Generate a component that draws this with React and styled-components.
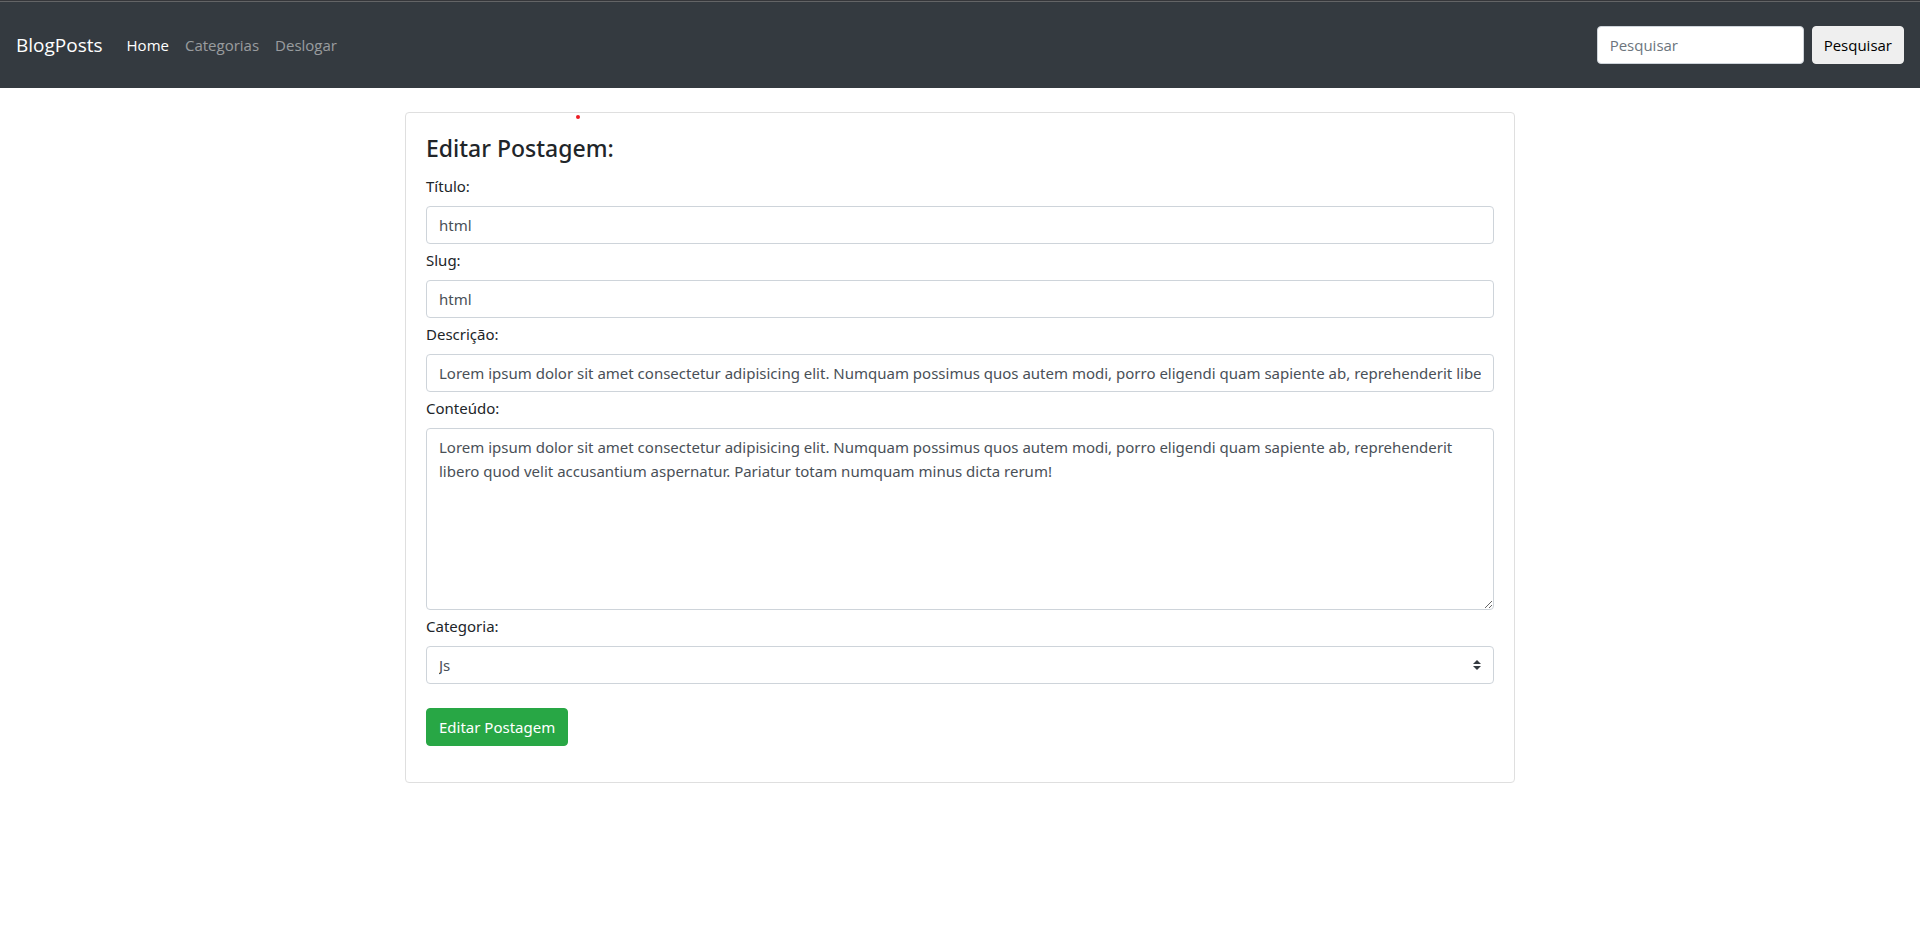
import React from "react";
import styled, { createGlobalStyle } from "styled-components";

const GlobalStyle = createGlobalStyle`
  *, *::before, *::after { box-sizing: border-box; }
  body {
    margin: 0;
    background: #fff;
    color: #212529;
    font-family: "Segoe UI", "Noto Sans", "Open Sans", sans-serif;
    font-size: 15px;
    line-height: 24px;
  }
  input, textarea, select, button { font: inherit; }
`;

const TopEdge = styled.div`
  height: 2px;
  background: #35363a;
  border-bottom: 1px solid #636466;
`;

const Navbar = styled.nav`
  display: flex;
  align-items: center;
  padding: 24px 16px;
  background: #343a40;
  font-family: "Segoe UI", "Open Sans", "Noto Sans", sans-serif;
`;

const Brand = styled.a`
  margin-right: 16px;
  color: #fff;
  font-size: 19px;
  line-height: 30px;
  text-decoration: none;
`;

const NavList = styled.ul`
  display: flex;
  flex: 1;
  margin: 0;
  padding: 0;
  list-style: none;
`;

const NavLink = styled.a`
  display: block;
  padding: 4px 8px;
  color: ${(p) => (p.$active ? "#fff" : "rgba(255, 255, 255, 0.5)")};
  text-decoration: none;
`;

const SearchForm = styled.form`
  display: flex;
  gap: 8px;
`;

const Input = styled.input`
  display: block;
  width: 100%;
  height: 38px;
  padding: 6px 12px;
  border: 1px solid #ced4da;
  border-radius: 4px;
  background: #fff;
  color: #495057;
  &::placeholder { color: #6c757d; opacity: 1; }
`;

const SearchInput = styled(Input)`
  width: 207px;
`;

const Button = styled.button`
  padding: 6px 12px;
  border: 1px solid ${(p) => (p.$success ? "#28a745" : "#efefef")};
  border-radius: 4px;
  background: ${(p) => (p.$success ? "#28a745" : "#efefef")};
  color: ${(p) => (p.$success ? "#fff" : "#000")};
  cursor: pointer;
`;

const SearchButton = styled(Button)`
  padding: 6px 11px;
`;

const Container = styled.main`
  max-width: 1110px;
  margin: 24px auto;
`;

const Card = styled.section`
  position: relative;
  padding: 20px 20px 36px;
  border: 1px solid #dfdfdf;
  border-radius: 4px;
`;

const Marker = styled.span`
  position: absolute;
  top: 2px;
  left: 170px;
  width: 4px;
  height: 4px;
  border-radius: 50%;
  background: #ed1c24;
`;

const Title = styled.h1`
  margin: 0 0 10px;
  font-size: 23px;
  font-weight: 500;
  line-height: 31px;
`;

const PostForm = styled.form`
  display: flex;
  flex-direction: column;
  gap: 4px;
`;

const Field = styled.div`
  display: flex;
  flex-direction: column;
  gap: 8px;
`;

const TextArea = styled.textarea`
  display: block;
  width: 100%;
  height: 182px;
  padding: 6px 12px;
  border: 1px solid #ced4da;
  border-radius: 4px;
  background: #fff;
  color: #495057;
  resize: vertical;
`;

const SelectWrap = styled.div`
  position: relative;
`;

const Select = styled.select`
  display: block;
  width: 100%;
  height: 38px;
  padding: 6px 28px 6px 12px;
  border: 1px solid #ced4da;
  border-radius: 4px;
  background: #fff;
  color: #495057;
  appearance: none;
`;

const SelectArrows = styled.svg`
  position: absolute;
  top: 14px;
  right: 13px;
  width: 8px;
  height: 10px;
  pointer-events: none;
`;

const Actions = styled.div`
  padding-top: 20px;
`;

const LOREM =
  "Lorem ipsum dolor sit amet consectetur adipisicing elit. Numquam possimus quos autem modi, porro eligendi quam sapiente ab, reprehenderit libero quod velit accusantium aspernatur. Pariatur totam numquam minus dicta rerum!";

const stop = (e) => e.preventDefault();

export default function App() {
  return (
    <>
      <GlobalStyle />
      <header>
        <TopEdge />
        <Navbar>
          <Brand href="#">BlogPosts</Brand>
          <NavList>
            <li><NavLink href="#" $active aria-current="page">Home</NavLink></li>
            <li><NavLink href="#">Categorias</NavLink></li>
            <li><NavLink href="#">Deslogar</NavLink></li>
          </NavList>
          <SearchForm onSubmit={stop} role="search">
            <SearchInput type="search" placeholder="Pesquisar" aria-label="Pesquisar" />
            <SearchButton type="submit">Pesquisar</SearchButton>
          </SearchForm>
        </Navbar>
      </header>
      <Container>
        <Card>
          <Marker aria-hidden="true" />
          <Title>Editar Postagem:</Title>
          <PostForm onSubmit={stop}>
            <Field>
              <label htmlFor="titulo">Título:</label>
              <Input id="titulo" type="text" defaultValue="html" />
            </Field>
            <Field>
              <label htmlFor="slug">Slug:</label>
              <Input id="slug" type="text" defaultValue="html" />
            </Field>
            <Field>
              <label htmlFor="descricao">Descrição:</label>
              <Input id="descricao" type="text" defaultValue={LOREM} />
            </Field>
            <Field>
              <label htmlFor="conteudo">Conteúdo:</label>
              <TextArea id="conteudo" defaultValue={LOREM} />
            </Field>
            <Field>
              <label htmlFor="categoria">Categoria:</label>
              <SelectWrap>
                <Select id="categoria" defaultValue="js">
                  <option value="js">Js</option>
                </Select>
                <SelectArrows viewBox="0 0 4 5" aria-hidden="true">
                  <path fill="#343a40" d="M2 0L0 2h4zm0 5L0 3h4z" />
                </SelectArrows>
              </SelectWrap>
            </Field>
            <Actions>
              <Button type="submit" $success>Editar Postagem</Button>
            </Actions>
          </PostForm>
        </Card>
      </Container>
    </>
  );
}
